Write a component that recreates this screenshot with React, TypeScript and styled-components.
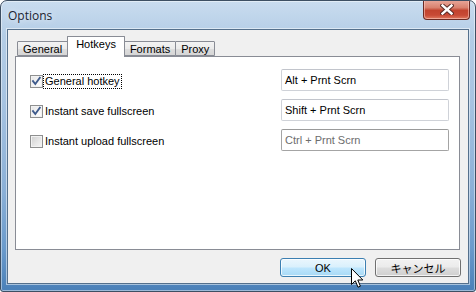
import React from 'react';
import styled, { createGlobalStyle } from 'styled-components';

const GlobalStyle = createGlobalStyle`
  html, body {
    margin: 0;
    padding: 0;
    background: #ffffff;
  }
  body {
    font-family: "Liberation Sans", Arial, sans-serif;
    font-size: 11px;
    color: #000;
  }
  * { box-sizing: border-box; }
`;

const Window = styled.div`
  position: relative;
  width: 476px;
  height: 292px;
  overflow: hidden;
  display: flex;
  flex-direction: column;
  border: 1px solid #3d4f63;
  border-radius: 7px 7px 3px 3px;
  background: linear-gradient(180deg, #c9dcef 0%, #b4cde6 12%, #a6c3e1 35%, #8bb0d7 65%, #6b9bcc 85%, #4a80b8 100%);
  box-shadow: inset 0 0 0 1px rgba(255, 255, 255, 0.45);
`;

const TitleBar = styled.div`
  height: 28px;
  flex: none;
  display: flex;
  align-items: center;
  padding-left: 7px;
`;

const Title = styled.span`
  font-family: "Open Sans", "Noto Sans", sans-serif;
  font-size: 12px;
  color: #1b2430;
  text-shadow: 0 0 6px rgba(255, 255, 255, 0.9);
`;

const CloseButton = styled.div`
  align-self: flex-start;
  margin-left: auto;
  margin-right: 5px;
  margin-top: -1px;
  width: 47px;
  height: 20px;
  display: flex;
  align-items: center;
  justify-content: center;
  border: 1px solid #6b2a23;
  border-top: none;
  border-radius: 0 0 4px 4px;
  background: linear-gradient(180deg, #e9a99c 0%, #d9826f 40%, #c2432e 55%, #c84a36 80%, #e07a60 100%);
  box-shadow: inset 0 0 0 1px rgba(255, 210, 200, 0.55);
`;

const Client = styled.div`
  flex: 1;
  margin: 0 6px 7px 6px;
  display: flex;
  flex-direction: column;
  padding: 6px 8px 6px 7px;
  background: #f0f0f0;
  border: 1px solid #55708c;
  box-shadow: 0 0 0 1px rgba(255, 255, 255, 0.5);
`;

const TabStrip = styled.div`
  display: flex;
  align-items: flex-end;
  height: 21px;
  margin-bottom: -1px;
  padding-left: 2px;
`;

const Tab = styled.div<{ $active?: boolean }>`
  position: relative;
  z-index: ${p => (p.$active ? 2 : 1)};
  height: ${p => (p.$active ? '21px' : '15px')};
  margin-bottom: ${p => (p.$active ? '0' : '1px')};
  margin-left: -1px;
  padding: ${p => (p.$active ? '1px 8px 0' : '0 5px')};
  line-height: ${p => (p.$active ? '13px' : '14px')};
  border: 1px solid #898c95;
  border-bottom: ${p => (p.$active ? 'none' : '1px solid #898c95')};
  background: ${p =>
    p.$active ? '#ffffff' : 'linear-gradient(180deg, #f3f3f3 0%, #ebebeb 50%, #dedede 51%, #d6d6d6 100%)'};
  border-radius: 1px 1px 0 0;
  font-size: 11px;
  color: #000;
  &:first-child { margin-left: 0; }
`;

const Panel = styled.div`
  position: relative;
  z-index: 0;
  flex: 1;
  background: #ffffff;
  border: 1px solid #898c95;
  padding: 12px 10px 0 14px;
  display: flex;
  flex-direction: column;
  gap: 8px;
`;

const Row = styled.div`
  height: 22px;
  display: flex;
  align-items: center;
  justify-content: space-between;
`;

const CheckLabel = styled.label`
  display: flex;
  align-items: center;
  gap: 1px;
  margin-top: 3px;
`;

const Box = styled.span<{ $checked?: boolean }>`
  width: 13px;
  height: 13px;
  display: flex;
  align-items: center;
  justify-content: center;
  border: 1px solid #8e8f8f;
  background: ${p =>
    p.$checked
      ? 'linear-gradient(135deg, #e4e4e4 0%, #f7f7f7 60%, #ffffff 100%)'
      : 'linear-gradient(135deg, #cfcfcf 0%, #e6e6e6 55%, #f6f6f6 100%)'};
  box-shadow: inset 0 0 0 1px #f2f2f2;
`;

const LabelText = styled.span<{ $focused?: boolean }>`
  padding: 0 1px;
  line-height: 13px;
  outline: ${p => (p.$focused ? '1px dotted #000' : 'none')};
  outline-offset: 0;
  font-size: 11px;
`;

const TextField = styled.div<{ $disabled?: boolean }>`
  width: 168px;
  height: 22px;
  display: flex;
  align-items: center;
  padding-left: 3px;
  border: 1px solid ${p => (p.$disabled ? '#a4a4a4' : '#cfd2d8')};
  border-top-color: ${p => (p.$disabled ? '#9a9a9a' : '#c2c5cc')};
  border-radius: 2px;
  background: #ffffff;
  color: ${p => (p.$disabled ? '#6d6d6d' : '#000')};
  font-size: 11px;
`;

const ButtonRow = styled.div`
  display: flex;
  justify-content: flex-end;
  gap: 9px;
  margin-top: 8px;
  margin-right: -1px;
`;

const Button = styled.div<{ $hot?: boolean }>`
  width: 86px;
  height: 19px;
  display: flex;
  align-items: center;
  justify-content: center;
  border: 1px solid ${p => (p.$hot ? '#3c7fb1' : '#707070')};
  border-radius: 3px;
  background: ${p =>
    p.$hot
      ? 'linear-gradient(180deg, #eaf6fd 0%, #d9f0fc 48%, #bee6fd 52%, #a7d9f5 100%)'
      : 'linear-gradient(180deg, #f2f2f2 0%, #ebebeb 48%, #dddddd 52%, #cfcfcf 100%)'};
  box-shadow: inset 0 0 0 1px rgba(255, 255, 255, 0.75);
  font-family: "Liberation Sans", "Noto Sans CJK JP", sans-serif;
  font-size: 11px;
  color: #000;
`;

const Cursor = styled.svg`
  position: absolute;
  left: 350px;
  top: 267px;
  z-index: 5;
`;

const Check = () => (
  <svg width="11" height="11" viewBox="0 0 11 11">
    <path d="M2 5.2 L4.3 8 L8.8 1.8" fill="none" stroke="#3f5b8c" strokeWidth="1.9" strokeLinecap="square" />
  </svg>
);

const hotkeys = [
  { label: 'General hotkey', value: 'Alt + Prnt Scrn', checked: true, focused: true },
  { label: 'Instant save fullscreen', value: 'Shift + Prnt Scrn', checked: true },
  { label: 'Instant upload fullscreen', value: 'Ctrl + Prnt Scrn', checked: false, disabled: true },
];

const tabs = ['General', 'Hotkeys', 'Formats', 'Proxy'];

export default function App() {
  return (
    <>
      <GlobalStyle />
      <Window>
        <TitleBar>
          <Title>Options</Title>
          <CloseButton>
            <svg width="14" height="11" viewBox="0 0 14 11">
              <path d="M2.5 1.5 L11.5 9.5 M11.5 1.5 L2.5 9.5" stroke="#5a2b26" strokeWidth="4.4" strokeLinecap="square" />
              <path d="M2.5 1.5 L11.5 9.5 M11.5 1.5 L2.5 9.5" stroke="#ffffff" strokeWidth="2.4" strokeLinecap="square" />
            </svg>
          </CloseButton>
        </TitleBar>
        <Client>
          <TabStrip>
            {tabs.map(t => (
              <Tab key={t} $active={t === 'Hotkeys'}>{t}</Tab>
            ))}
          </TabStrip>
          <Panel>
            {hotkeys.map(h => (
              <Row key={h.label}>
                <CheckLabel>
                  <Box $checked={h.checked}>{h.checked && <Check />}</Box>
                  <LabelText $focused={h.focused}>{h.label}</LabelText>
                </CheckLabel>
                <TextField $disabled={h.disabled}>{h.value}</TextField>
              </Row>
            ))}
          </Panel>
          <ButtonRow>
            <Button $hot>OK</Button>
            <Button>キャンセル</Button>
          </ButtonRow>
        </Client>
        <Cursor width="13" height="21" viewBox="0 0 13 21">
          <path d="M0.5 0.5 L0.5 16.5 L4.3 12.8 L7 19.2 L9.4 18.2 L6.8 12 L11.8 12 Z" fill="#ffffff" stroke="#000000" strokeWidth="1" strokeLinejoin="miter" />
        </Cursor>
      </Window>
    </>
  );
}
